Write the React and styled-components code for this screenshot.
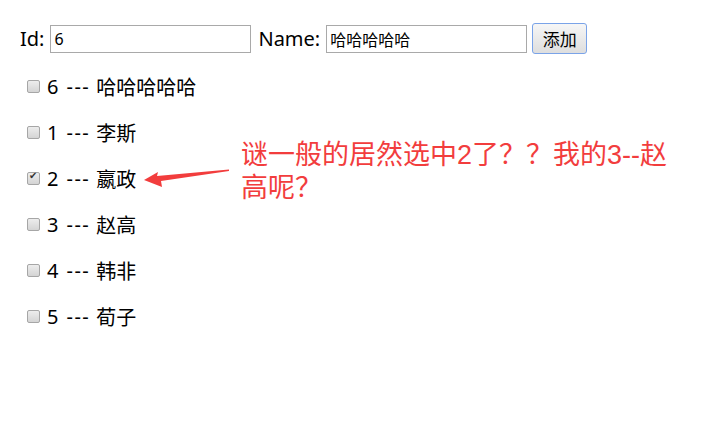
import React, { useState } from "react";
import { styled, createGlobalStyle } from "styled-components";

const GlobalStyle = createGlobalStyle`
  body {
    margin: 0;
    background: #fff;
    font-family: "Noto Sans", "Noto Sans CJK SC", sans-serif;
    color: #000;
  }
`;

const people = [
  { id: 6, name: "哈哈哈哈哈" },
  { id: 1, name: "李斯" },
  { id: 2, name: "嬴政" },
  { id: 3, name: "赵高" },
  { id: 4, name: "韩非" },
  { id: 5, name: "荀子" },
];

function App() {
  const [checked, setChecked] = useState([2]);

  const toggle = (id) => {
    setChecked((c) => (c.includes(id) ? c.filter((x) => x !== id) : [...c, id]));
  };

  return (
    <Page>
      <GlobalStyle />
      <Toolbar>
        <Label $before={0} $after={6}>Id:</Label>
        <TextInput defaultValue="6" />
        <Label $before={7} $after={6}>Name:</Label>
        <TextInput defaultValue="哈哈哈哈哈" />
        <AddButton>添加</AddButton>
      </Toolbar>
      <List>
        {people.map((p) => (
          <Item key={p.id}>
            <Check
              type="checkbox"
              checked={checked.includes(p.id)}
              onChange={() => toggle(p.id)}
            />
            {p.id}
            <Dash>---</Dash>
            {p.name}
          </Item>
        ))}
      </List>
      {/* screenshot annotation */}
      <Arrow width="92" height="25" viewBox="0 0 92 25">
        <path d="M3 15 L17 7 L16 11 L88 4.5 L88 6 L20 16 L21 22 Z" fill="#f23d3d" />
      </Arrow>
      <NoteText>
        <NoteLine>谜一般的居然选中2了？？我的3--赵</NoteLine>
        <NoteLine>高呢？</NoteLine>
      </NoteText>
    </Page>
  );
}

export default App;

const Page = styled.div`
  position: relative;
  height: 425px;
  padding: 23px 20px 0;
  box-sizing: border-box;
`;

const Toolbar = styled.div`
  display: flex;
  align-items: center;
`;

const Label = styled.span`
  font-size: 20px;
  line-height: 28px;
  margin: 0 ${(p) => p.$after}px 0 ${(p) => p.$before}px;
`;

const TextInput = styled.input`
  width: 201px;
  height: 28px;
  box-sizing: border-box;
  border: 1px solid #a9a9a9;
  padding: 1px 3px;
  font-size: 16px;
  font-family: "Noto Sans", "Noto Sans CJK SC", sans-serif;
  outline: none;
`;

const AddButton = styled.button`
  width: 55px;
  height: 31px;
  margin-left: 5px;
  border: 1px solid #7aa3e8;
  border-radius: 3px;
  background: linear-gradient(#f6f6f6, #dedede);
  font-size: 17px;
  font-family: "Noto Sans", "Noto Sans CJK SC", sans-serif;
  color: #000;
  padding: 0;
`;

const List = styled.div`
  margin-top: 19px;
  display: flex;
  flex-direction: column;
  gap: 20px;
`;

const Item = styled.label`
  display: flex;
  align-items: center;
  height: 26px;
  font-size: 20px;
`;

const Dash = styled.span`
  margin: 0 6px 0 8px;
  letter-spacing: 1.5px;
`;

const Check = styled.input`
  appearance: none;
  position: relative;
  width: 13px;
  height: 13px;
  margin: 0 7px 0 7px;
  box-sizing: border-box;
  border: 1px solid #a6a6a6;
  border-radius: 2px;
  background: linear-gradient(#ededed, #d4d4d4);

  &:checked::after {
    content: "✔";
    position: absolute;
    left: 1px;
    top: -3px;
    font-size: 10px;
    color: #333;
  }
`;

const Arrow = styled.svg`
  position: absolute;
  left: 141px;
  top: 165px;
`;

const NoteText = styled.div`
  position: absolute;
  left: 241px;
  top: 139px;
  color: #f23d3d;
  font-family: "Liberation Sans", "Noto Sans CJK SC", sans-serif;
  font-size: 27px;
`;

const NoteLine = styled.div`
  height: 33px;
  line-height: 33px;
  white-space: nowrap;
`;
